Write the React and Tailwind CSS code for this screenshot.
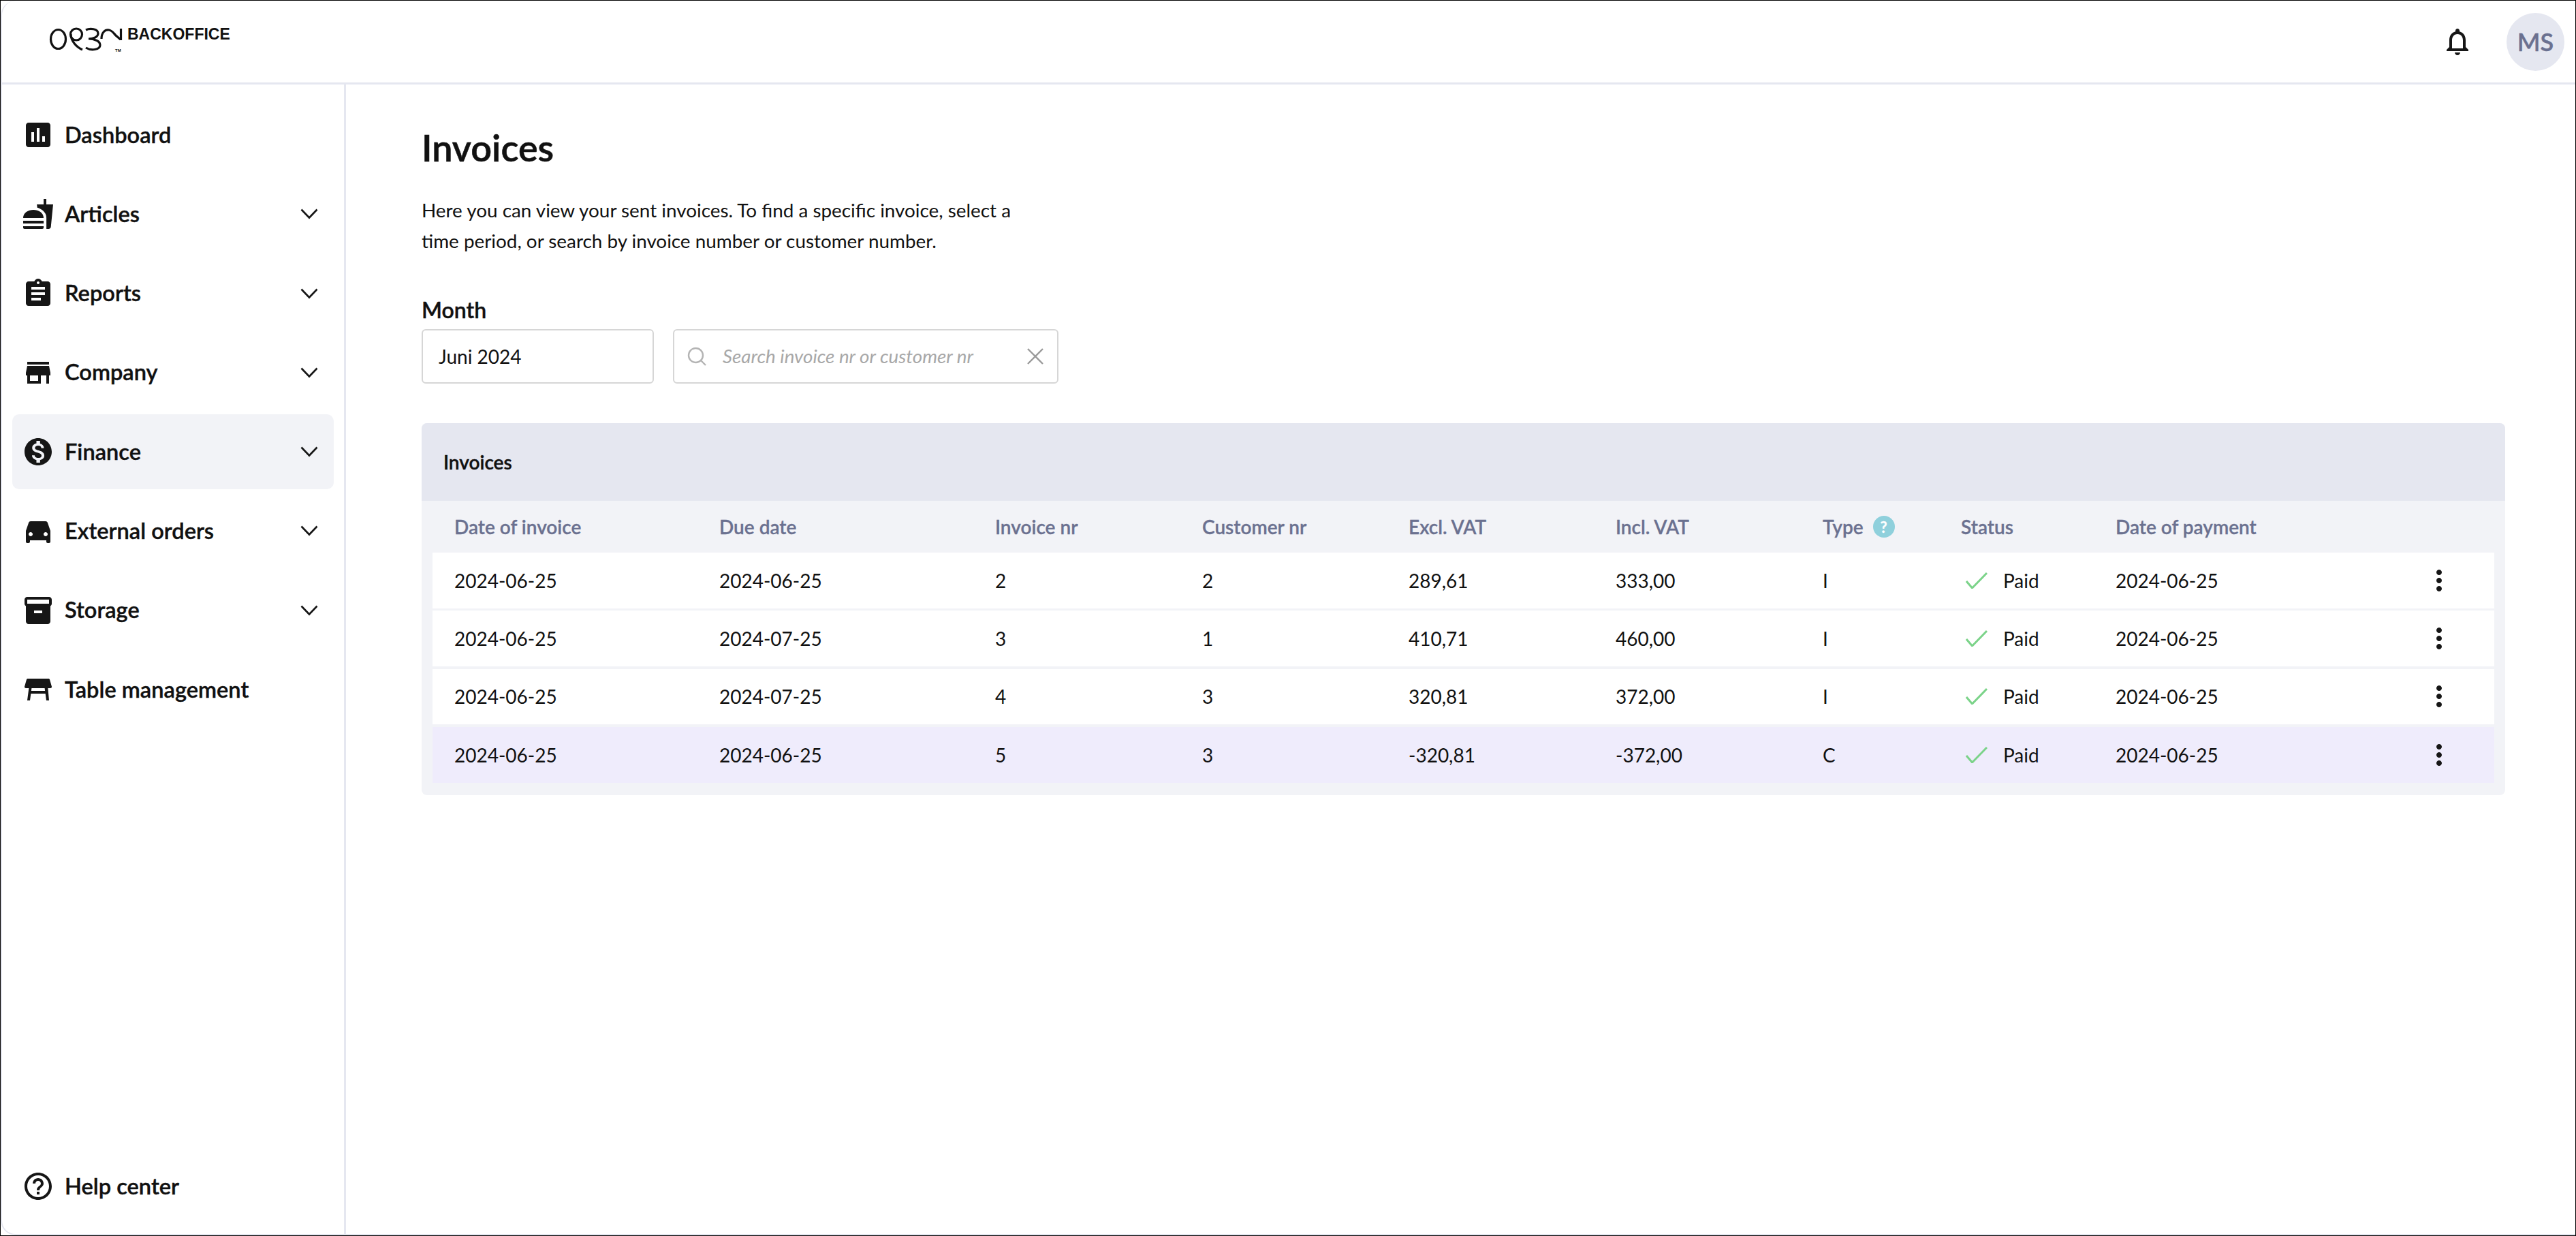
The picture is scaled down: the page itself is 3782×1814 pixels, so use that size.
import React from "react";

const paths = {
  assessment: "M19 3H5c-1.1 0-2 .9-2 2v14c0 1.1.9 2 2 2h14c1.1 0 2-.9 2-2V5c0-1.1-.9-2-2-2zM9 17H7v-7h2v7zm4 0h-2V7h2v10zm4 0h-2v-4h2v4z",
  fastfood: "M18.06 22.99h1.66c.84 0 1.53-.64 1.63-1.46L23 5.05h-5V1h-1.97v4.05h-4.97l.3 2.34c1.71.47 3.31 1.32 4.27 2.26 1.44 1.42 2.43 2.89 2.43 5.29v8.05zM1 21.99V21h15.03v.99c0 .55-.45 1-1.01 1H2.01c-.56 0-1.01-.45-1.01-1zm15.03-7c.01-8-15.03-8-15.03 0h15.03zM1.02 17h15v2h-15z",
  assignment: "M19 3h-4.18C14.4 1.84 13.3 1 12 1c-1.3 0-2.4.84-2.82 2H5c-1.1 0-2 .9-2 2v14c0 1.1.9 2 2 2h14c1.1 0 2-.9 2-2V5c0-1.1-.9-2-2-2zm-7 0c.55 0 1 .45 1 1s-.45 1-1 1-1-.45-1-1 .45-1 1-1zm2 14H7v-2h7v2zm3-4H7v-2h10v2zm0-4H7V7h10v2z",
  store: "M20 4H4v2h16V4zm1 10v-2l-1-5H4l-1 5v2h1v6h10v-6h4v6h2v-6h1zm-9 4H6v-4h6v4z",
  money: "M12 2C6.48 2 2 6.48 2 12s4.48 10 10 10 10-4.48 10-10S17.52 2 12 2zm1.41 16.09V20h-2.67v-1.93c-1.71-.36-3.16-1.46-3.27-3.4h1.96c.1 1.05.82 1.87 2.65 1.87 1.96 0 2.4-.98 2.4-1.59 0-.83-.44-1.61-2.67-2.14-2.48-.6-4.18-1.62-4.18-3.67 0-1.72 1.39-2.84 3.11-3.21V4h2.67v1.95c1.86.45 2.79 1.86 2.85 3.39H14.3c-.05-1.11-.64-1.87-2.22-1.87-1.5 0-2.4.68-2.4 1.64 0 .84.65 1.39 2.67 1.91s4.18 1.39 4.18 3.91c-.01 1.83-1.38 2.83-3.12 3.16z",
  car: "M18.92 6.01C18.72 5.42 18.16 5 17.5 5h-11c-.66 0-1.21.42-1.42 1.01L3 12v8c0 .55.45 1 1 1h1c.55 0 1-.45 1-1v-1h12v1c0 .55.45 1 1 1h1c.55 0 1-.45 1-1v-8l-2.08-5.99zM6.5 16c-.83 0-1.5-.67-1.5-1.5S5.67 13 6.5 13s1.5.67 1.5 1.5S7.33 16 6.5 16zm11 0c-.83 0-1.5-.67-1.5-1.5s.67-1.5 1.5-1.5 1.5.67 1.5 1.5-.67 1.5-1.5 1.5z",
  inventory: "M20 2H4c-1 0-2 .9-2 2v3.01c0 .72.43 1.34 1 1.69V20c0 1.1 1.1 2 2 2h14c.9 0 2-.9 2-2V8.7c.57-.35 1-.97 1-1.69V4c0-1.1-1-2-2-2zm-5 12H9v-2h6v2zm5-7H4V4l16-.02V7z",
  table: "M21.96 9.73l-1.43-5c-.12-.43-.51-.73-.96-.73H4.43c-.45 0-.84.3-.96.73l-1.43 5c-.18.63.3 1.27.96 1.27h2.2L4 20h2l.67-5h10.67l.66 5h2l-.8-9H21c.66 0 1.14-.64.96-1.27zM6.93 13l.27-2h9.6l.27 2H6.93z",
  help: "M11 18h2v-2h-2v2zm1-16C6.48 2 2 6.48 2 12s4.48 10 10 10 10-4.48 10-10S17.52 2 12 2zm0 18c-4.41 0-8-3.59-8-8s3.59-8 8-8 8 3.59 8 8-3.59 8-8 8zm0-14c-2.21 0-4 1.79-4 4h2c0-1.1.9-2 2-2s2 .9 2 2c0 2-3 1.75-3 5h2c0-2.25 3-2.5 3-5 0-2.21-1.79-4-4-4z",
  bell: "M12 22c1.1 0 2-.9 2-2h-4c0 1.1.9 2 2 2zm6-6v-5c0-3.07-1.63-5.64-4.5-6.32V4c0-.83-.67-1.5-1.5-1.5s-1.5.67-1.5 1.5v.68C7.64 5.36 6 7.92 6 11v5l-2 2v1h16v-1l-2-2zm-2 1H8v-6c0-2.48 1.51-4.5 4-4.5s4 2.02 4 4.5v6z",
  more: "M12 8c1.1 0 2-.9 2-2s-.9-2-2-2-2 .9-2 2 .9 2 2 2zm0 2c-1.1 0-2 .9-2 2s.9 2 2 2 2-.9 2-2-.9-2-2-2zm0 6c-1.1 0-2 .9-2 2s.9 2 2 2 2-.9 2-2-.9-2-2-2z",
};

const Icon = ({ name, className = "w-12 h-12" }) => (
  <svg viewBox="0 0 24 24" className={`${className} shrink-0 fill-[#161616]`}>
    <path d={paths[name]} />
  </svg>
);

const Chevron = () => (
  <svg viewBox="0 0 26 16" className="w-[26px] h-4 ml-auto mr-[11px] shrink-0">
    <path d="M1.5 1.5 13 13.5 24.5 1.5" fill="none" stroke="#161616" strokeWidth="2.6" />
  </svg>
);

const Logo = () => (
  <svg viewBox="0 0 110 42" className="w-[110px] h-[42px] shrink-0">
    <g fill="none" stroke="#111" strokeWidth="3.2">
      <ellipse cx="15.5" cy="17.5" rx="11" ry="14" />
      <circle cx="42" cy="10.5" r="8.5" />
      <path d="M34 10 C34 20 42 29 51 33" />
      <path d="M56 4 C62 1 74 2 74 9 C74 15 66 17 60 17 C68 17 77 20 77 26 C77 33 64 35 56 30" />
      <path d="M79 17 C79 8 84 3 90 4 C95 5 97 9 100 12 L107 18" />
      <path d="M107.5 2 V19" />
    </g>
    <text x="99" y="36" fontSize="6" fontWeight="700" fill="#111" fontFamily="'Liberation Sans', sans-serif">TM</text>
  </svg>
);

const navItems = [
  { label: "Dashboard", icon: "assessment" },
  { label: "Articles", icon: "fastfood", sub: true },
  { label: "Reports", icon: "assignment", sub: true },
  { label: "Company", icon: "store", sub: true },
  { label: "Finance", icon: "money", sub: true, active: true },
  { label: "External orders", icon: "car", sub: true },
  { label: "Storage", icon: "inventory", sub: true },
  { label: "Table management", icon: "table" },
];

const rows = [
  { date: "2024-06-25", due: "2024-06-25", nr: 2, cust: 2, excl: "289,61", incl: "333,00", type: "I" },
  { date: "2024-06-25", due: "2024-07-25", nr: 3, cust: 1, excl: "410,71", incl: "460,00", type: "I" },
  { date: "2024-06-25", due: "2024-07-25", nr: 4, cust: 3, excl: "320,81", incl: "372,00", type: "I" },
  { date: "2024-06-25", due: "2024-06-25", nr: 5, cust: 3, excl: "-320,81", incl: "-372,00", type: "C", credit: true },
];

const cols = "grid grid-cols-[389px_405px_304px_303px_304px_304px_203px_227px_1fr] items-center pl-[32px]";

const App = () => {
  return (
    <div className="w-[3782px] h-[1814px] border border-black bg-white text-[#111] font-['Lato',sans-serif] overflow-hidden">
      <div className="h-full flex flex-col border-l-2 border-b-2 border-[#e5e7f0] rounded-l-[22px]">
        <header className="h-[123px] shrink-0 flex items-center border-b-[3px] border-[#e5e7f0]">
          <div className="ml-[67px] flex items-start">
            <Logo />
            <span className="ml-[7px] mt-[-4px] text-[23px] leading-[28px] font-bold text-[#111] font-['Liberation_Sans',sans-serif]">BACKOFFICE</span>
          </div>
          <div className="ml-auto flex items-center">
            <Icon name="bell" />
            <div className="ml-[48px] mr-[16px] w-[85px] h-[85px] rounded-full bg-[#e5e7f0] text-[#6b7190] text-[36px] font-semibold [-webkit-text-stroke:0.4px] flex items-center justify-center">MS</div>
          </div>
        </header>
        <div className="flex-1 flex min-h-0">
          <aside className="w-[505px] shrink-0 border-r-[3px] border-[#e5e7f0] flex flex-col pl-[15px] pr-[15px] pt-[19px] pb-[46px]">
            <nav className="flex flex-col gap-[6.3px]">
              {navItems.map((item) => (
                <div
                  key={item.label}
                  className={`h-[110px] flex items-center gap-[15px] pl-[14px] pr-[12px] rounded-[10px] text-[32.6px] font-semibold [-webkit-text-stroke:0.4px] ${item.active ? "bg-[#f2f3f7]" : ""}`}
                >
                  <Icon name={item.icon} />
                  <span>{item.label}</span>
                  {item.sub && <Chevron />}
                </div>
              ))}
            </nav>
            <div className="mt-auto h-[48px] flex items-center gap-[15px] pl-[14px] text-[32.6px] font-semibold [-webkit-text-stroke:0.4px]">
              <Icon name="help" />
              <span>Help center</span>
            </div>
          </aside>
          <main className="flex-1 pl-[111px] pr-[103px] pt-[59px]">
            <h1 className="text-[54px] leading-[68px] font-semibold [-webkit-text-stroke:0.6px]">Invoices</h1>
            <p className="mt-[36px] text-[27.85px] leading-[44.5px]">
              Here you can view your sent invoices. To find a specific invoice, select a
              <br />
              time period, or search by invoice number or customer number.
            </p>
            <label className="block mt-[59px] text-[32px] leading-[40px] font-semibold [-webkit-text-stroke:0.4px]">Month</label>
            <div className="mt-[8px] flex gap-[28px]">
              <div className="w-[341px] h-[80px] border-2 border-[#d6d6d6] rounded-[6px] flex items-center pl-[23px] text-[28px]">Juni 2024</div>
              <div className="w-[566px] h-[80px] border-2 border-[#d6d6d6] rounded-[6px] flex items-center pl-[19px] pr-[20px]">
                <svg viewBox="0 0 28 28" className="w-7 h-7 shrink-0">
                  <circle cx="12.5" cy="12.5" r="10.5" fill="none" stroke="#b4b4b4" strokeWidth="2.4" />
                  <path d="M20 20 27 27" stroke="#b4b4b4" strokeWidth="2.4" />
                </svg>
                <span className="ml-[24px] text-[27.75px] italic text-[#a8a8a8]">Search invoice nr or customer nr</span>
                <svg viewBox="0 0 24 24" className="w-6 h-6 ml-auto shrink-0">
                  <path d="M1 1 23 23M23 1 1 23" stroke="#9a9a9a" strokeWidth="2.4" />
                </svg>
              </div>
            </div>
            <section className="mt-[58px] rounded-[8px] overflow-hidden bg-[#f2f3f7] pb-[18px]">
              <div className="h-[114px] bg-[#e5e7f0] flex items-center pl-[32px] text-[28px] font-semibold [-webkit-text-stroke:0.4px]">Invoices</div>
              <div className={`${cols} h-[76px] mx-4 text-[28px] font-semibold text-[#6b7190] [-webkit-text-stroke:0.3px]`}>
                <span>Date of invoice</span>
                <span>Due date</span>
                <span>Invoice nr</span>
                <span>Customer nr</span>
                <span>Excl. VAT</span>
                <span>Incl. VAT</span>
                <span className="flex items-center gap-[14px]">
                  Type
                  <span className="w-8 h-8 rounded-full bg-[#8fd0dc] text-white text-[22px] font-bold flex items-center justify-center">?</span>
                </span>
                <span>Status</span>
                <span>Date of payment</span>
              </div>
              <div className="flex flex-col gap-[3.6px] mx-4">
                {rows.map((row) => (
                  <div key={row.nr} className={`${cols} h-[81.7px] text-[28px] ${row.credit ? "bg-[#efecfc]" : "bg-white"}`}>
                    <span>{row.date}</span>
                    <span>{row.due}</span>
                    <span>{row.nr}</span>
                    <span>{row.cust}</span>
                    <span>{row.excl}</span>
                    <span>{row.incl}</span>
                    <span>{row.type}</span>
                    <span className="flex items-center pl-[7px]">
                      <svg viewBox="0 0 32 24" className="w-8 h-6 shrink-0">
                        <path d="M1 13 9.5 23 31 1" fill="none" stroke="#7bd389" strokeWidth="3" />
                      </svg>
                      <span className="ml-[23px]">Paid</span>
                    </span>
                    <span className="flex items-center justify-between pr-[57px]">
                      <span>2024-06-25</span>
                      <Icon name="more" />
                    </span>
                  </div>
                ))}
              </div>
            </section>
          </main>
        </div>
      </div>
    </div>
  );
};

export default App;
